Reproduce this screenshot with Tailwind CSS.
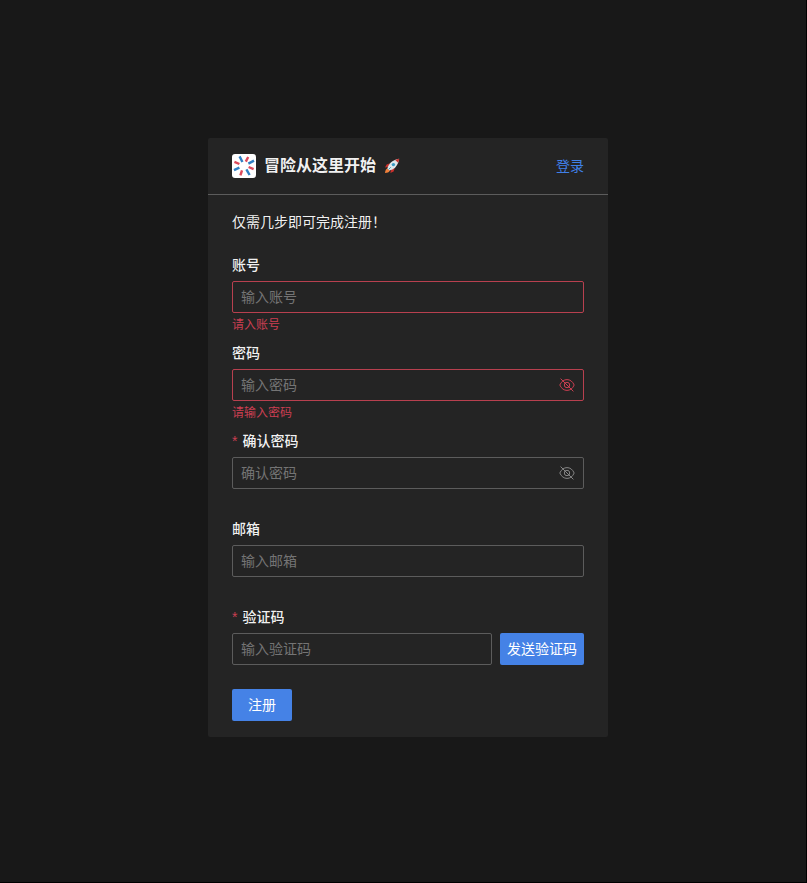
<!DOCTYPE html>
<html lang="zh-CN">
<head>
    <meta charset="UTF-8">
    <meta name="viewport" content="width=device-width, initial-scale=1.0">
    <title>注册</title>
    <script src="https://cdn.jsdelivr.net/npm/@tailwindcss/browser@4"></script>
</head>
<body class="flex min-h-screen items-center justify-center border-r border-b border-black bg-[#181818] pb-[7px] pl-[10px] font-['Liberation_Sans','Noto_Sans_CJK_SC',sans-serif] text-sm leading-[22px] text-white/95">

    <!-- Register card -->
    <main class="w-full max-w-[400px] rounded-xs bg-[#242424]">
        <header class="flex h-[57px] items-center border-b border-[#5c5c5c] px-6">
            <svg class="mr-2 size-6" viewBox="0 0 24 24" fill="none" stroke-width="2.4" aria-hidden="true">
                <rect width="24" height="24" rx="3" fill="#fff"/>
                <g stroke="#2f7fc4">
                    <path d="M10.400 8L7.600 2.400"/>
                    <path d="M16.400 9.600L22 6.600"/>
                    <path d="M14.400 15.400L17.600 21"/>
                    <path d="M7.400 13.600L2 16.200"/>
                </g>
                <g stroke="#dc4a5c">
                    <path d="M13.800 7.600L16.200 3"/>
                    <path d="M16.600 13L21.600 15.200"/>
                    <path d="M10 16.400L8.400 21.400"/>
                    <path d="M7.400 10L2.400 7.800"/>
                </g>
            </svg>
            <h1 class="text-base leading-6 font-bold">冒险从这里开始</h1>
            <svg class="ml-2 size-4" viewBox="0 0 16 16" role="img" aria-label="火箭">
                <path fill="#c9302c" d="M6 5.200L2.600 6.400 1 9.600l3.200-.6zM10.800 10l-1.200 3.400-3.200 1.600.6-3.400z"/>
                <path fill="#f2803a" d="M3.600 10.200c-1.800.6-2.400 2.600-2.600 4.800 2.200-.2 4.200-.8 4.800-2.600z"/>
                <path fill="#dfe7ea" d="M3.400 10.600C4.200 6.600 7.800 1.800 15.200.8 14.200 8.200 9.400 11.800 5.400 12.600z"/>
                <path fill="#c9302c" d="M11.200 1.900C12.400 1.300 13.700 1 15.200.8c-.2 1.500-.5 2.800-1.100 4z"/>
                <circle cx="9.400" cy="6.600" r="1.700" fill="#3b9cc4"/>
                <path stroke="#3b9cc4" d="M4.600 11.400l2.200-2.200"/>
            </svg>
            <a href="#" class="ml-auto text-[#4080e8]">登录</a>
        </header>

        <div class="px-6 py-4">
            <p>仅需几步即可完成注册！</p>

            <form class="mt-5" novalidate>
                <div>
                    <label for="account" class="mb-1 block leading-6 font-medium">账号</label>
                    <input id="account" type="text" placeholder="输入账号" class="block h-8 w-full rounded-xs border border-[#b8404f] px-2 outline-none placeholder:text-[#747474]">
                    <p class="h-7 text-xs leading-6 text-[#cb3f52]">请入账号</p>
                </div>

                <div>
                    <label for="password" class="mb-1 block leading-6 font-medium">密码</label>
                    <div class="flex h-8 items-center rounded-xs border border-[#b8404f] px-2">
                        <input id="password" type="password" placeholder="输入密码" class="min-w-0 flex-1 outline-none placeholder:text-[#747474]">
                        <button type="button" aria-label="显示密码" class="text-[#cb3f52]">
                            <svg class="size-4" viewBox="0 0 16 16" fill="none" stroke="currentColor">
                                <path d="M.8 8C2.400 4.400 5 2.600 8 2.600S13.600 4.400 15.200 8C13.600 11.600 11 13.400 8 13.400S2.400 11.600.8 8z"/>
                                <circle cx="8" cy="8" r="2.700"/>
                                <path d="M1.600 1.600l12.800 12.800"/>
                            </svg>
                        </button>
                    </div>
                    <p class="h-7 text-xs leading-6 text-[#cb3f52]">请输入密码</p>
                </div>

                <div class="mb-7">
                    <label for="confirm" class="mb-1 block leading-6 font-medium"><span class="mr-[5px] font-normal text-[#cb3f52]">*</span>确认密码</label>
                    <div class="flex h-8 items-center rounded-xs border border-[#5c5c5c] px-2">
                        <input id="confirm" type="password" placeholder="确认密码" class="min-w-0 flex-1 outline-none placeholder:text-[#747474]">
                        <button type="button" aria-label="显示密码" class="text-[#858585]">
                            <svg class="size-4" viewBox="0 0 16 16" fill="none" stroke="currentColor">
                                <path d="M.8 8C2.400 4.400 5 2.600 8 2.600S13.600 4.400 15.200 8C13.600 11.600 11 13.400 8 13.400S2.400 11.600.8 8z"/>
                                <circle cx="8" cy="8" r="2.700"/>
                                <path d="M1.600 1.600l12.800 12.800"/>
                            </svg>
                        </button>
                    </div>
                </div>

                <div class="mb-7">
                    <label for="email" class="mb-1 block leading-6 font-medium">邮箱</label>
                    <input id="email" type="email" placeholder="输入邮箱" class="block h-8 w-full rounded-xs border border-[#5c5c5c] px-2 outline-none placeholder:text-[#747474]">
                </div>

                <div class="mb-6">
                    <label for="code" class="mb-1 block leading-6 font-medium"><span class="mr-[5px] font-normal text-[#cb3f52]">*</span>验证码</label>
                    <div class="flex gap-2">
                        <input id="code" type="text" placeholder="输入验证码" class="h-8 min-w-0 flex-1 rounded-xs border border-[#5c5c5c] px-2 outline-none placeholder:text-[#747474]">
                        <button type="button" class="h-8 w-[84px] rounded-xs bg-[#4582e6] text-white">发送验证码</button>
                    </div>
                </div>

                <button type="submit" class="block h-8 rounded-xs bg-[#4582e6] px-4 text-white">注册</button>
            </form>
        </div>
    </main>

</body>
</html>
